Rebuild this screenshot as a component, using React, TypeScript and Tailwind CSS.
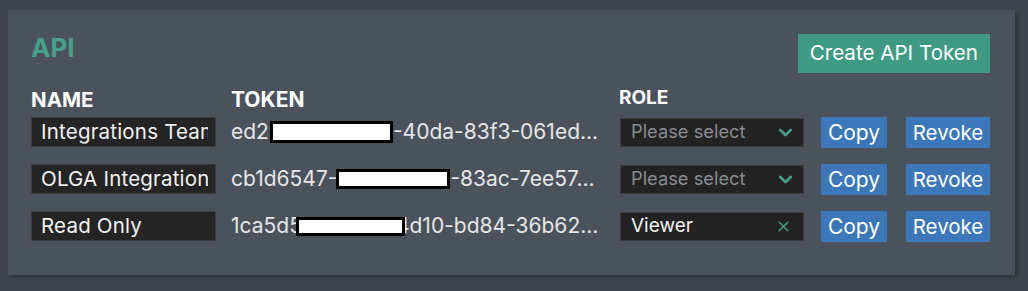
import { ChevronDown, X } from "lucide-react";

type Token = {
  name: string;
  head: string;
  tail: string;
  redact: string; // size/offset classes for the black-bordered box
  role?: string;
};

const tokens: Token[] = [
  {
    name: "Integrations Team",
    head: "ed2",
    tail: "-40da-83f3-061ed...",
    redact: "w-[123px] h-[22px] ml-[1px]",
  },
  {
    name: "OLGA Integration",
    head: "cb1d6547-",
    tail: "-83ac-7ee57...",
    redact: "w-[114px] h-[20px] -ml-[1px]",
  },
  {
    name: "Read Only",
    head: "1ca5d5",
    tail: "4d10-bd84-36b62...",
    redact: "w-[109px] h-[19px] -ml-[6px] -mr-[9px]",
    role: "Viewer",
  },
];

function RoleSelect({ role }: { role?: string }) {
  return (
    <div className="flex h-[29px] w-[184px] items-center justify-between border border-[#3c3c3c] bg-[#232323] pl-[10px] pr-[7px]">
      {role ? (
        <>
          <span className="text-[19px] text-[#f2f2f2]">{role}</span>
          <X className="mr-[4px] h-[17px] w-[17px] text-[#45a08a]" strokeWidth={2} />
        </>
      ) : (
        <>
          <span className="text-[18.3px] text-[#878c91]">Please select</span>
          <ChevronDown className="h-[21px] w-[21px] text-[#45a08a]" strokeWidth={3.2} />
        </>
      )}
    </div>
  );
}

export default function App() {
  return (
    <div
      className="h-[291px] w-full bg-[#3e454c] pl-2 pr-[13px] pt-[10px]"
      style={{ fontFamily: "Inter, 'Noto Sans', sans-serif" }}
    >
      <div className="h-[265px] w-[1007px] bg-[#4a535b] pl-[23px] pr-[25px] pt-[22px] shadow-[3px_2px_4px_rgba(0,0,0,0.25)]">
        <div className="flex items-start justify-between">
          <h2 className="text-[26px] font-bold leading-[32px] text-[#46a08b]">API</h2>
          <button className="mt-[2px] h-[39px] bg-[#3f9a83] px-[12px] text-[20.6px] text-white">
            Create API Token
          </button>
        </div>

        <div className="mt-[15px] flex h-[24px] items-end text-white">
          <div className="w-[200px] text-[20.5px] font-bold leading-[24px]">NAME</div>
          <div className="w-[388px] text-[21px] font-bold leading-[24px]">TOKEN</div>
          <div className="mb-[3px] text-[19px] font-bold leading-[22px]">ROLE</div>
        </div>

        <div className="mt-[4px] flex flex-col gap-[15px]">
          {tokens.map((t) => (
            <div key={t.name} className="flex h-[32px] items-center">
              <input
                readOnly
                value={t.name}
                className="h-[30px] w-[185px] border border-[#3c3c3c] bg-[#242424] pl-[9px] pr-[7px] text-[20.5px] tracking-[0.2px] text-[#f2f2f2] outline-none"
              />
              <div className="ml-[15px] flex w-[374px] items-center whitespace-nowrap text-[21px] text-[#e6e6e6]">
                <span>{t.head}</span>
                <span className={`relative z-10 inline-block border-[3px] border-black bg-white ${t.redact}`} />
                <span>{t.tail}</span>
              </div>
              <div className="ml-[15px]">
                <RoleSelect role={t.role} />
              </div>
              <button className="ml-[17px] h-[31px] w-[66px] bg-[#3b77b9] text-[21px] leading-[31px] text-white">
                Copy
              </button>
              <button className="ml-[19px] h-[31px] w-[84px] bg-[#3b77b9] text-[20.5px] leading-[31px] text-white">
                Revoke
              </button>
            </div>
          ))}
        </div>
      </div>
    </div>
  );
}
